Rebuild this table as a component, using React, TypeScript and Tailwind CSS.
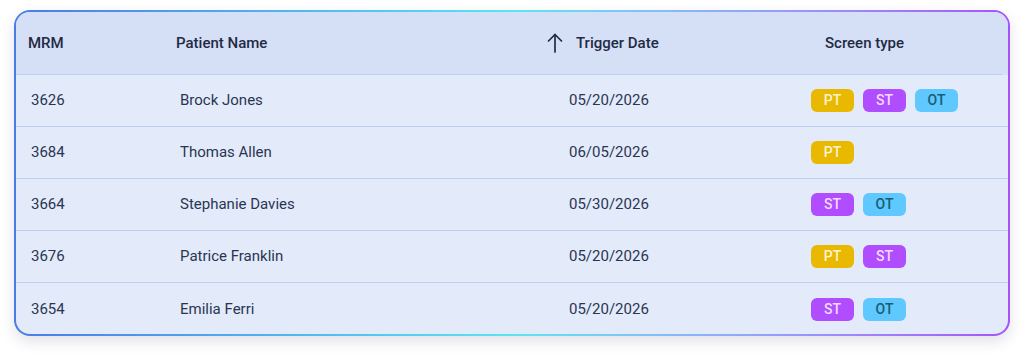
type Tag = "PT" | "ST" | "OT";

const rows: { mrm: string; name: string; date: string; tags: Tag[] }[] = [
  { mrm: "3626", name: "Brock Jones", date: "05/20/2026", tags: ["PT", "ST", "OT"] },
  { mrm: "3684", name: "Thomas Allen", date: "06/05/2026", tags: ["PT"] },
  { mrm: "3664", name: "Stephanie Davies", date: "05/30/2026", tags: ["ST", "OT"] },
  { mrm: "3676", name: "Patrice Franklin", date: "05/20/2026", tags: ["PT", "ST"] },
  { mrm: "3654", name: "Emilia Ferri", date: "05/20/2026", tags: ["ST", "OT"] },
];

const tagStyles: Record<Tag, string> = {
  PT: "bg-[#e8b900] text-[#fff4cc]",
  ST: "bg-[#b04dff] text-[#f3dcff]",
  OT: "bg-[#5ec8ff] text-[#175e73]",
};

function Badge({ tag }: { tag: Tag }) {
  return (
    <span className={`w-[43px] h-[23px] rounded-[6px] flex items-center justify-center text-[14px] font-medium ${tagStyles[tag]}`}>
      {tag}
    </span>
  );
}

function SortArrow() {
  return (
    <svg width="16" height="20" viewBox="0 0 16 20" fill="none" stroke="#1f2b45" strokeWidth="1.7" strokeLinecap="round" strokeLinejoin="round" className="shrink-0">
      <path d="M8 1.5V19" />
      <path d="M1.5 8L8 1.5L14.5 8" />
    </svg>
  );
}

export default function App() {
  return (
    <div className="w-[1024px] h-[357px] bg-white pt-[10px] pl-[14px] font-['Roboto',sans-serif] text-[#1f2b45]">
      <div className="w-[996px] h-[326px] rounded-[16px] p-[2px] bg-gradient-to-r from-[#4b7be6] via-[#5ce4f2] to-[#a552fa] shadow-[0_6px_14px_rgba(30,40,80,0.13)]">
        <div className="w-full h-full rounded-[14px] overflow-hidden bg-[#e3ebfa]">
          {/* header */}
          <div className="bg-[#d5dff6]">
            <div className="h-[62px] flex items-center text-[15px] font-medium">
              <div className="w-[160px] pl-[12px]">MRM</div>
              <div className="w-[371px]">Patient Name</div>
              <div className="w-[278px] flex items-center gap-[13px]">
                <SortArrow />
                <span>Trigger Date</span>
              </div>
              <div>Screen type</div>
            </div>
            <div className="h-px bg-[#b9cdf6] mr-[6px]" />
          </div>

          {/* rows */}
          {rows.map((r, i) => (
            <div
              key={r.mrm}
              className={`h-[52px] flex items-center text-[15px] text-[#2a3552] ${i < rows.length - 1 ? "border-b border-[#bccff6]" : ""}`}
            >
              <div className="w-[164px] pl-[15px]">{r.mrm}</div>
              <div className="w-[389px]">{r.name}</div>
              <div className="w-[242px]">{r.date}</div>
              <div className="flex gap-[9px]">
                {r.tags.map((t) => (
                  <Badge key={t} tag={t} />
                ))}
              </div>
            </div>
          ))}
        </div>
      </div>
    </div>
  );
}
